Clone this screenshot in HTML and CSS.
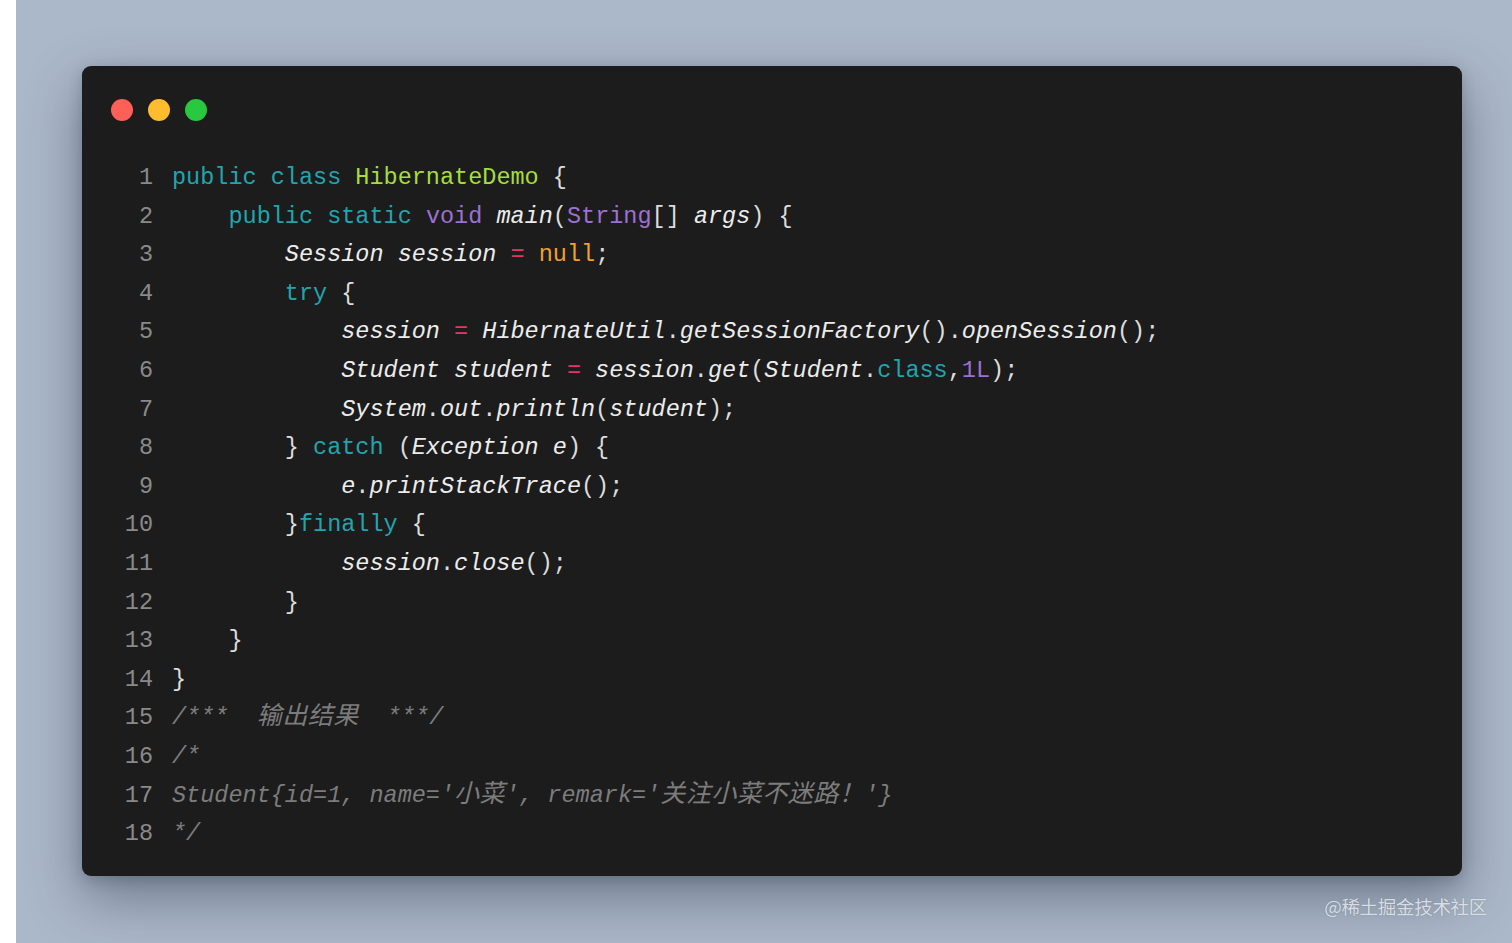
FILE: index.html
```html
<!DOCTYPE html>
<html lang="zh">
<head>
<meta charset="utf-8">
<title>HibernateDemo</title>
<link rel="stylesheet" href="styles.css">
</head>
<body>
<div class="stage">
  <div class="window">
    <div class="dots">
      <span class="dot red"></span>
      <span class="dot yellow"></span>
      <span class="dot green"></span>
    </div>
    <div class="code">
      <div class="line"><span class="ln">1</span><span class="src"><span class="kw">public</span> <span class="kw">class</span> <span class="cls">HibernateDemo</span> {</span></div>
      <div class="line"><span class="ln">2</span><span class="src">    <span class="kw">public</span> <span class="kw">static</span> <span class="ty">void</span> <span class="id">main</span>(<span class="ty">String</span>[] <span class="id">args</span>) {</span></div>
      <div class="line"><span class="ln">3</span><span class="src">        <span class="id">Session</span> <span class="id">session</span> <span class="op">=</span> <span class="nu">null</span>;</span></div>
      <div class="line"><span class="ln">4</span><span class="src">        <span class="kw">try</span> {</span></div>
      <div class="line"><span class="ln">5</span><span class="src">            <span class="id">session</span> <span class="op">=</span> <span class="id">HibernateUtil</span>.<span class="id">getSessionFactory</span>().<span class="id">openSession</span>();</span></div>
      <div class="line"><span class="ln">6</span><span class="src">            <span class="id">Student</span> <span class="id">student</span> <span class="op">=</span> <span class="id">session</span>.<span class="id">get</span>(<span class="id">Student</span>.<span class="kw">class</span>,<span class="ty">1L</span>);</span></div>
      <div class="line"><span class="ln">7</span><span class="src">            <span class="id">System</span>.<span class="id">out</span>.<span class="id">println</span>(<span class="id">student</span>);</span></div>
      <div class="line"><span class="ln">8</span><span class="src">        } <span class="kw">catch</span> (<span class="id">Exception</span> <span class="id">e</span>) {</span></div>
      <div class="line"><span class="ln">9</span><span class="src">            <span class="id">e</span>.<span class="id">printStackTrace</span>();</span></div>
      <div class="line"><span class="ln">10</span><span class="src">        }<span class="kw">finally</span> {</span></div>
      <div class="line"><span class="ln">11</span><span class="src">            <span class="id">session</span>.<span class="id">close</span>();</span></div>
      <div class="line"><span class="ln">12</span><span class="src">        }</span></div>
      <div class="line"><span class="ln">13</span><span class="src">    }</span></div>
      <div class="line"><span class="ln">14</span><span class="src">}</span></div>
      <div class="line"><span class="ln">15</span><span class="src cm">/***  <span class="zh">输出结果</span>  ***/</span></div>
      <div class="line"><span class="ln">16</span><span class="src cm">/*</span></div>
      <div class="line"><span class="ln">17</span><span class="src cm">Student{id=1, name='<span class="zh">小菜</span>', remark='<span class="zh">关注小菜不迷路！</span>'}</span></div>
      <div class="line"><span class="ln">18</span><span class="src cm">*/</span></div>
    </div>
  </div>
  <div class="watermark">@稀土掘金技术社区</div>
</div>
</body>
</html>
```

FILE: styles.css
```css
html, body {
  margin: 0;
  padding: 0;
  background: #ffffff;
}

.stage {
  margin-left: 16px;
  height: 943px;
  background: #abb8c9;
  padding: 66px 0 0 66px;
  box-sizing: border-box;
  position: relative;
  overflow: hidden;
}

.window {
  width: 1380px;
  height: 810px;
  box-sizing: border-box;
  background: #1c1c1c;
  border-radius: 9px;
  box-shadow: 0 22px 55px rgba(40, 48, 66, 0.45), 0 4px 14px rgba(40, 48, 66, 0.25);
  padding: 33px 0 0 29px;
}

.dots {
  display: flex;
  gap: 15px;
  height: 22px;
}

.dot {
  width: 22px;
  height: 22px;
  border-radius: 50%;
}

.red { background: #fe5f57; }
.yellow { background: #febc2e; }
.green { background: #28c840; }

.code {
  margin-top: 38px;
  font-family: "Liberation Mono", "Noto Sans CJK SC", monospace;
  font-size: 23.5px;
  line-height: 38.6px;
  color: #dcdcdc;
}

.line {
  display: flex;
  height: 38.6px;
}

.ln {
  width: 42px;
  text-align: right;
  color: #8a8a8a;
  flex: none;
}

.src {
  margin-left: 19px;
  white-space: pre;
}

.kw { color: #22a4ae; }
.cls { color: #a6dc3e; }
.ty { color: #9d70d2; }
.nu { color: #f0a030; }
.op { color: #e8336a; }
.id { font-style: italic; color: #ececec; }

.cm {
  font-style: italic;
  color: #7c7c7c;
}

.zh {
  font-size: 25px;
  letter-spacing: 0.5px;
  line-height: 1;
}

.watermark {
  position: absolute;
  right: 25px;
  bottom: 26px;
  font-family: "Noto Sans CJK SC", "Noto Sans", sans-serif;
  font-size: 18.5px;
  line-height: 22px;
  color: rgba(236, 240, 245, 0.85);
  text-shadow: 0 0 1px rgba(80, 90, 110, 0.6);
  letter-spacing: -0.3px;
}
```
